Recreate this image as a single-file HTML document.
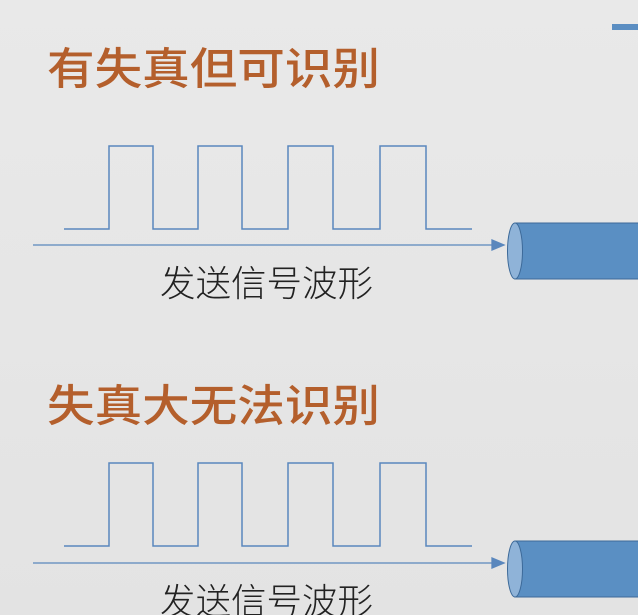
<!DOCTYPE html>
<html><head><meta charset="utf-8"><style>
html,body{margin:0;padding:0;width:638px;height:615px;overflow:hidden;background:#e6e6e6}
svg{display:block}
</style></head><body>
<svg width="638" height="615" viewBox="0 0 638 615" xmlns="http://www.w3.org/2000/svg">
<defs><linearGradient id="bg" x1="0" y1="0" x2="0" y2="1"><stop offset="0" stop-color="#e9e9e9"/><stop offset="1" stop-color="#e3e3e3"/></linearGradient></defs>
<rect width="638" height="615" fill="url(#bg)"/>
<rect x="612" y="24" width="26" height="6" fill="#5b8ec2"/>
<g font-family="'Noto Sans CJK SC','WenQuanYi Zen Hei',sans-serif" font-weight="500" fill="#b45f2c" font-size="44">
<text x="47" y="84" textLength="333" lengthAdjust="spacingAndGlyphs">有失真但可识别</text>
<text x="47" y="421" textLength="333" lengthAdjust="spacingAndGlyphs">失真大无法识别</text>
</g>
<g font-family="'Noto Sans CJK SC','WenQuanYi Zen Hei',sans-serif" font-weight="300" fill="#222" font-size="36">
<text x="160" y="296" textLength="213" lengthAdjust="spacingAndGlyphs">发送信号波形</text>
<text x="160" y="614" textLength="213" lengthAdjust="spacingAndGlyphs">发送信号波形</text>
</g>
<g fill="none" stroke="#5a87bd" stroke-width="1.5">
<path d="M64 229H109V146H153V229H198V146H242V229H288V146H333V229H380V146H426V229H472"/>
<path d="M64 546H109V463H153V546H198V463H242V546H288V463H333V546H380V463H426V546H472"/>
</g>
<g stroke="#5a87bd" stroke-width="1.3" fill="#5a87bd">
<line x1="33" y1="245" x2="495" y2="245"/><path d="M492 240L504 245L492 250Z"/>
<line x1="33" y1="563" x2="495" y2="563"/><path d="M492 558L504 563L492 568Z"/>
</g>
<g>
<rect x="515" y="223" width="130" height="56" fill="#5a8fc3" stroke="#3d6a99" stroke-width="1"/>
<ellipse cx="515" cy="251" rx="7.5" ry="28" fill="#8fb3d8" stroke="#3d6a99" stroke-width="1"/>
<rect x="515" y="541" width="130" height="56" fill="#5a8fc3" stroke="#3d6a99" stroke-width="1"/>
<ellipse cx="515" cy="569" rx="7.5" ry="28" fill="#8fb3d8" stroke="#3d6a99" stroke-width="1"/>
</g>
</svg>
</body></html>
